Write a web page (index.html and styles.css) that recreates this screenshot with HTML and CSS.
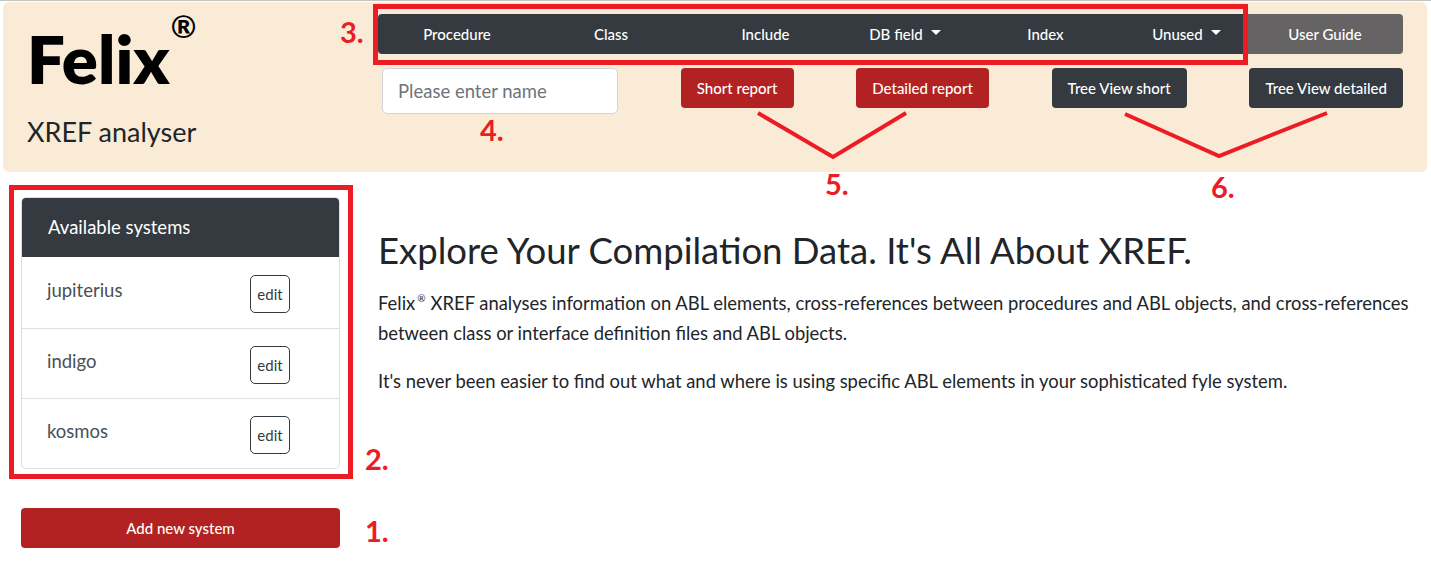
FILE: index.html
```html
<!DOCTYPE html>
<html lang="en">
<head>
<meta charset="utf-8">
<title>Felix XREF analyser</title>
<link rel="stylesheet" href="styles.css">
</head>
<body>
<header class="top">
  <div class="brand">
    <div class="logo">Felix<span class="reg">®</span></div>
    <div class="tagline">XREF analyser</div>
  </div>
  <div class="controls">
    <nav class="menu">
      <div class="menu-bar">
        <a class="menu-item" href="#">Procedure</a>
        <a class="menu-item" href="#">Class</a>
        <a class="menu-item" href="#">Include</a>
        <a class="menu-item" href="#">DB field<span class="caret"></span></a>
        <a class="menu-item" href="#">Index</a>
        <a class="menu-item" href="#">Unused<span class="caret"></span></a>
      </div>
      <a class="guide" href="#">User Guide</a>
    </nav>
    <div class="actions">
      <input class="name-input" type="text" placeholder="Please enter name">
      <button class="btn btn-red">Short report</button>
      <button class="btn btn-red">Detailed report</button>
      <button class="btn btn-dark">Tree View short</button>
      <button class="btn btn-dark">Tree View detailed</button>
    </div>
  </div>
</header>

<div class="content">
  <aside class="sidebar">
    <div class="card">
      <div class="card-header">Available systems</div>
      <ul class="systems">
        <li class="system"><span class="system-name">jupiterius</span><button class="edit">edit</button></li>
        <li class="system"><span class="system-name">indigo</span><button class="edit">edit</button></li>
        <li class="system"><span class="system-name">kosmos</span><button class="edit">edit</button></li>
      </ul>
    </div>
    <button class="btn btn-red add">Add new system</button>
  </aside>
  <main class="intro">
    <h1 class="title">Explore Your Compilation Data. It's All About XREF.</h1>
    <p class="text">Felix<span class="mini-reg">®</span>XREF analyses information on ABL elements, cross-references between procedures and ABL objects, and cross-references between class or interface definition files and ABL objects.</p>
    <p class="text">It's never been easier to find out what and where is using specific ABL elements in your sophisticated fyle system.</p>
  </main>
</div>

<div class="annotations">
  <svg class="lines" width="1431" height="561" viewBox="0 0 1431 561">
    <polyline points="758,113 833,157 906,113" />
    <polyline points="1125,114 1219,156 1327,113" />
  </svg>
  <div class="mark-box box-nav"></div>
  <div class="mark-box box-card"></div>
  <span class="num n3">3.</span>
  <span class="num n4">4.</span>
  <span class="num n5">5.</span>
  <span class="num n6">6.</span>
  <span class="num n2">2.</span>
  <span class="num n1">1.</span>
</div>
</body>
</html>
```

FILE: styles.css
```css
* { box-sizing: border-box; }

body {
  margin: 0;
  border-top: 1px solid #c3c3c3;
  font-family: Lato, "Open Sans", sans-serif;
  color: #212529;
  background: #fff;
  overflow: hidden;
}

/* ---------- header ---------- */
.top {
  display: flex;
  margin: 1px 4px 0 3px;
  height: 170px;
  background: #faebd7;
  border-radius: 6px;
}

.brand {
  width: 375px;
  padding: 24px 0 0 24px;
}

.logo {
  font-size: 67px;
  font-weight: 800;
  line-height: 64px;
  color: #000;
}

.reg {
  font-size: 31px;
  font-weight: 700;
  line-height: 0;
  vertical-align: 46px;
  margin-left: 1px;
}

.tagline {
  margin-top: 26px;
  font-size: 27px;
  line-height: 1.2;
  color: #212529;
}

.controls {
  width: 1025px;
  padding-top: 12px;
}

.menu {
  display: flex;
  height: 40px;
}

.menu-bar {
  width: 869px;
  display: grid;
  grid-template-columns: 158px 150px 159px 120px 161px 121px;
  background: #343a40;
  border-radius: 4px 0 0 4px;
}

.menu-item,
.guide {
  display: flex;
  align-items: center;
  justify-content: center;
  color: #fff;
  font-size: 15px;
  font-weight: 500;
  text-decoration: none;
}

.caret {
  display: inline-block;
  width: 0;
  height: 0;
  margin-left: 8px;
  margin-top: -3px;
  border-top: 5px solid #fff;
  border-left: 5px solid transparent;
  border-right: 5px solid transparent;
}

.guide {
  flex: 1;
  background: #656363;
  border-radius: 0 4px 4px 0;
}

.actions {
  display: flex;
  justify-content: space-between;
  align-items: flex-start;
  margin-top: 14px;
  padding-left: 4px;
}

.name-input {
  width: 236px;
  height: 46px;
  padding: 0 15px;
  border: 1px solid #ced4da;
  border-radius: 5px;
  background: #fff;
  font-family: Lato, "Open Sans", sans-serif;
  font-size: 18.5px;
  color: #495057;
}

.name-input::placeholder {
  color: #6c757d;
  opacity: 1;
}

.btn {
  height: 40px;
  padding: 0 16px;
  border: none;
  border-radius: 4px;
  color: #fff;
  font-family: Lato, "Open Sans", sans-serif;
  font-size: 15px;
  font-weight: 500;
}

.btn-red { background: #b22222; }
.btn-dark { background: #343a40; }

/* ---------- content ---------- */
.content {
  display: flex;
  padding: 25px 0 0 21px;
}

.sidebar {
  width: 319px;
  flex: none;
  margin-right: 38px;
}

.card {
  border: 1px solid #dedede;
  border-radius: 5px;
  overflow: hidden;
  background: #fff;
}

.card-header {
  height: 60px;
  margin: -1px -1px 0;
  padding-left: 27px;
  display: flex;
  align-items: center;
  background: #343a40;
  color: #fff;
  font-size: 18.5px;
}

.systems {
  list-style: none;
  margin: 0;
  padding: 0;
}

.system {
  display: flex;
  justify-content: space-between;
  align-items: flex-start;
  height: 70px;
  padding: 17px 49px 0 25px;
}

.system:first-child {
  height: 71px;
  padding-top: 18px;
}

.system + .system {
  border-top: 1px solid #e0e0e0;
}

.system-name {
  font-size: 18.5px;
  line-height: 30px;
  color: #495057;
}

.edit {
  width: 40px;
  height: 38px;
  padding: 0;
  border: 1px solid #343a40;
  border-radius: 5px;
  background: #fff;
  color: #343a40;
  font-family: Lato, "Open Sans", sans-serif;
  font-size: 15px;
}

.add {
  width: 100%;
  margin-top: 39px;
}

.intro {
  flex: 1;
  padding: 32px 15px 0 0;
}

.title {
  margin: 0 0 15px;
  font-size: 36.5px;
  font-weight: 400;
  line-height: 1.2;
  color: #212529;
}

.text {
  margin: 0 0 18px;
  font-size: 18.4px;
  line-height: 30px;
}

.mini-reg {
  display: inline-block;
  font-size: 10px;
  line-height: 10px;
  vertical-align: 8px;
  margin: 0 5px 0 2px;
}

/* ---------- annotations ---------- */
.annotations {
  position: absolute;
  left: 0;
  top: 0;
  width: 1431px;
  height: 561px;
  pointer-events: none;
}

.lines {
  position: absolute;
  left: 0;
  top: 0;
}

.lines polyline {
  fill: none;
  stroke: #ed1c24;
  stroke-width: 4;
}

.mark-box {
  position: absolute;
  border: 5px solid #ed1c24;
}

.box-nav { left: 373px; top: 4px; width: 875px; height: 61px; }
.box-card { left: 9px; top: 185px; width: 344px; height: 294px; }

.num {
  position: absolute;
  font-size: 29px;
  font-weight: 700;
  line-height: 1;
  color: #ed1c24;
}

.n3 { left: 340px; top: 17px; }
.n4 { left: 480px; top: 115px; }
.n5 { left: 825px; top: 169px; }
.n6 { left: 1211px; top: 172px; }
.n2 { left: 365px; top: 444px; }
.n1 { left: 365px; top: 516px; }
```
